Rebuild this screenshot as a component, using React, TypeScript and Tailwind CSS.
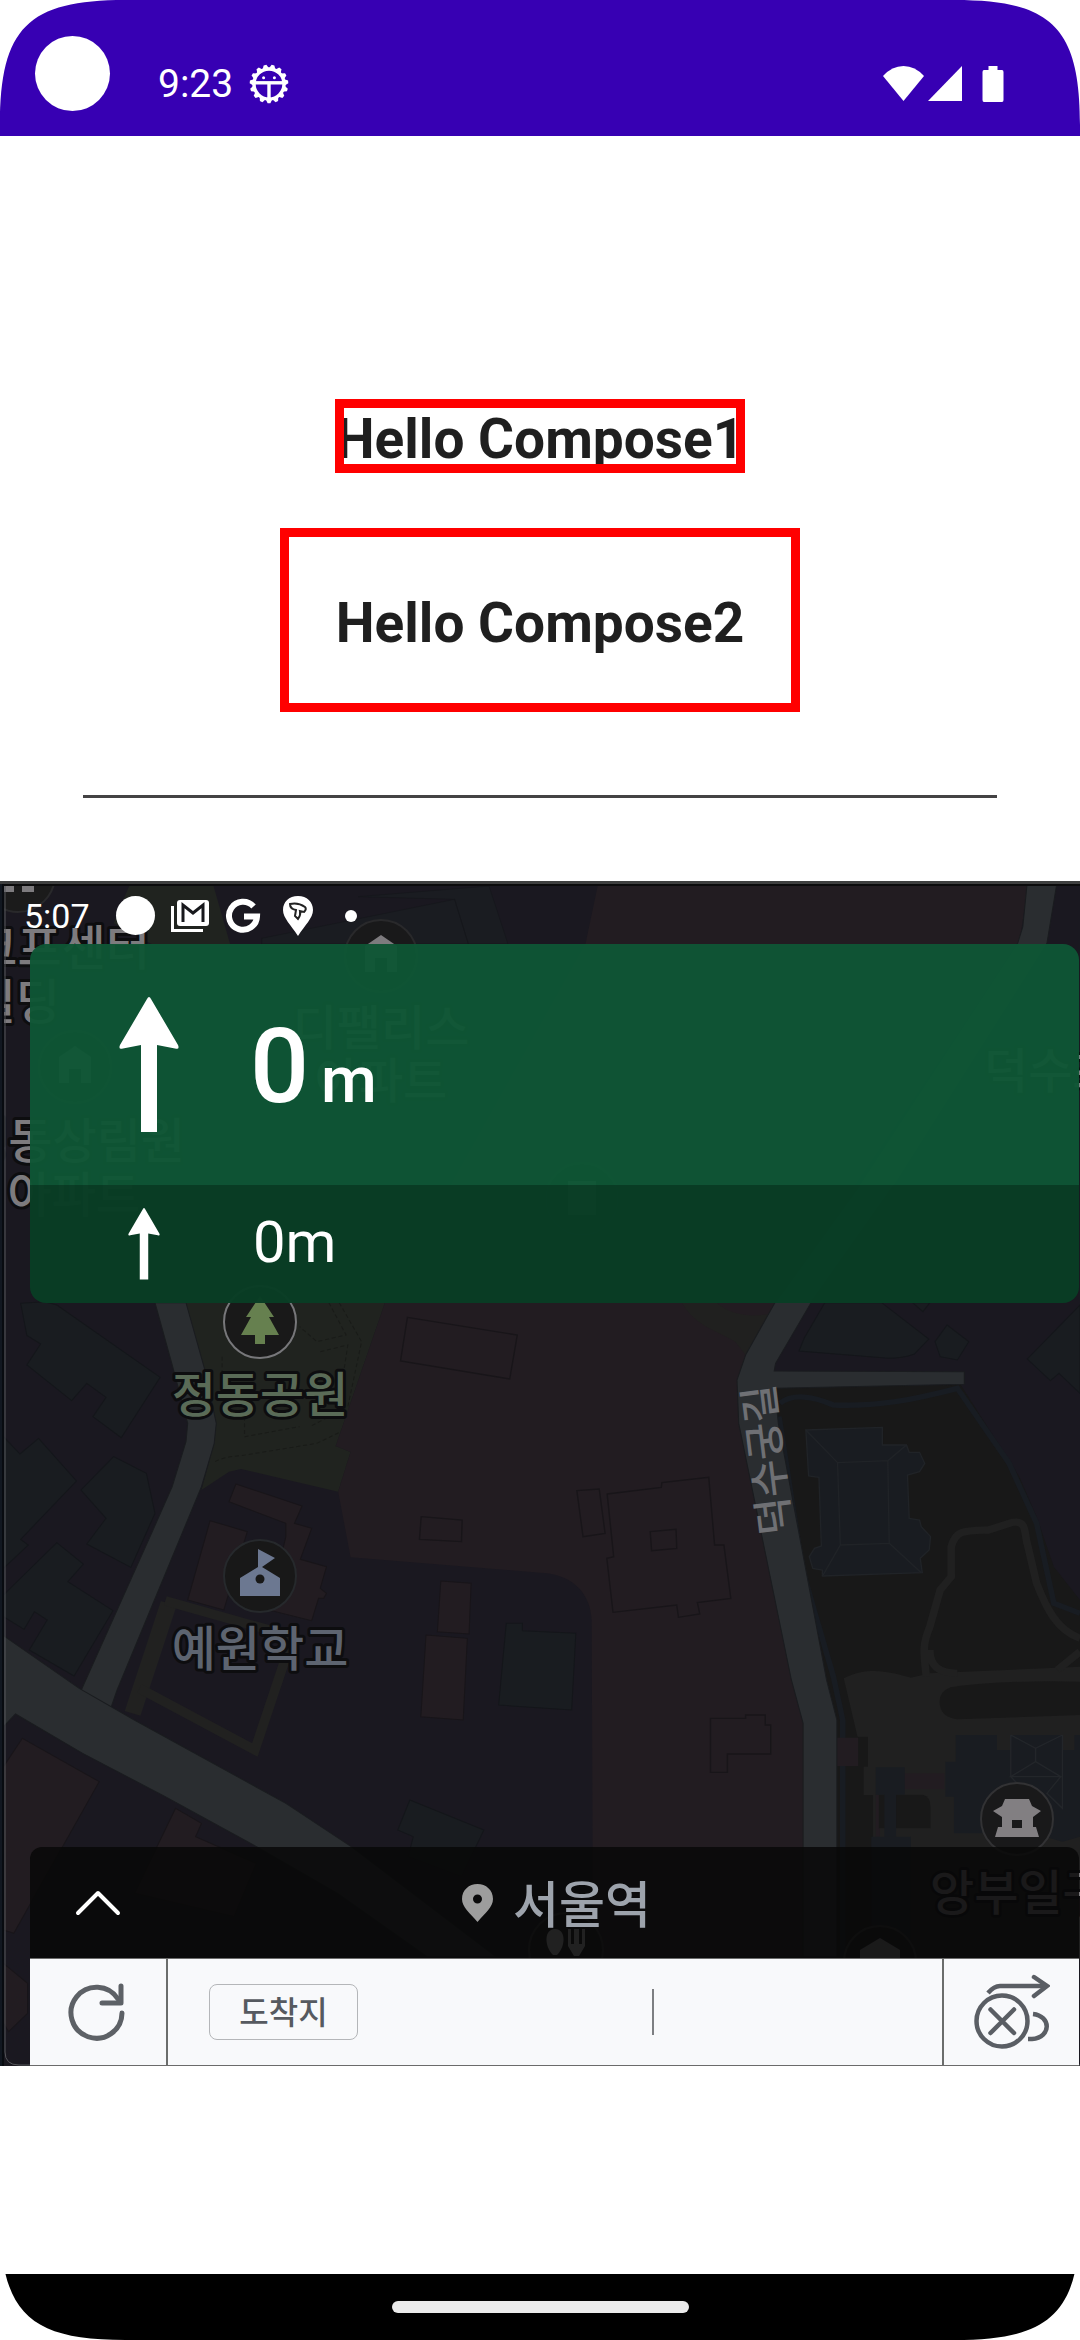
import React from "react";

type CornerProps = { className: string };

/* Smooth display corner laid over the edge of the screen. */
function ScreenCorner({ className }: CornerProps) {
  return (
    <svg className={`pointer-events-none absolute h-[125px] w-[125px] ${className}`} viewBox="0 0 125 125" aria-hidden="true">
      <path d="M0 0V125C0 28 28 0 125 0Z" fill="#fff" />
    </svg>
  );
}

function BugGearIcon() {
  const teeth = Array.from({ length: 15 }, (_, i) => i * 24 + 12);
  return (
    <svg className="h-10 w-10" viewBox="-20 -20 40 40" aria-hidden="true">
      {teeth.map((angle) => (
        <path key={angle} d="M-3.4-15L-1.4-19.3H1.4L3.4-15Z" fill="#fff" transform={`rotate(${angle})`} />
      ))}
      <circle r="15" fill="none" stroke="#fff" strokeWidth="3.4" />
      <path d="M-14-1.2H14" stroke="#fff" strokeWidth="3.4" />
      <path d="M0 0V14" stroke="#fff" strokeWidth="3.4" />
      <circle cx="-5.4" cy="-6.2" r="1.5" fill="#fff" />
      <circle cx="5.4" cy="-6.2" r="1.5" fill="#fff" />
    </svg>
  );
}

function SystemBar() {
  return (
    <header className="relative flex h-34 items-center justify-between bg-[#3700b3] pt-8 pr-[76px] pl-[158px] text-white">
      <div className="absolute top-9 left-[35px] h-[75px] w-[75px] rounded-full bg-white" />
      <div className="flex items-center gap-4">
        <span className="text-[39px] leading-[48px]">9:23</span>
        <BugGearIcon />
      </div>
      <div className="flex items-center">
        <svg className="h-9 w-[42px]" viewBox="0 0 42 36" aria-hidden="true">
          <path d="M0 10Q9 0 20.500 0T41 10L20.500 35Z" fill="#fff" />
        </svg>
        <svg className="ml-[3px] h-9 w-[34px]" viewBox="0 0 34 36" aria-hidden="true">
          <path d="M34 0V35H0Z" fill="#fff" />
        </svg>
        <svg className="ml-5 h-9 w-[22px]" viewBox="0 0 22 36" aria-hidden="true">
          <path d="M6.500 0H15.500V4H20Q21.500 4 21.500 6V34Q21.500 36 20 36H2Q.5 36 .5 34V6Q.5 4 2 4H6.500Z" fill="#fff" />
        </svg>
      </div>
      <ScreenCorner className="top-0 left-0" />
      <ScreenCorner className="top-0 right-0 rotate-90" />
    </header>
  );
}

function MapShapes() {
  return (
    <svg x="0" y="881" width="1080" height="1185" viewBox="0 -1227 3136 3555" preserveAspectRatio="none">
      <rect x="0" y="-1227" width="3136" height="3555" fill="#1a1820" />
      {/* park and school grounds */}
      <path d="M375-1212H620L668-1038H440L330-1100Z" fill="#20231f" />
      <path d="M760-1055L1320-1172L1360-1038H760ZM1040-1180L1420-1212L1475-1038H1360L1320-1172Z" fill="#1a1c21" stroke="#15161a" strokeWidth="2" />
      <path d="M540 38H1118L975 468L1018 486L982 605L700 537L665 545L585 600L622 460L628 400L595 240Z" fill="#20231f" />
      <path
        d="M955 38L1005 135L920 155L870 110M985 38L1050 155L1010 350L900 410M645 200V290M710 380V440L870 410M625 515Q650 500 700 497L920 460L1000 420M930 185L1010 165L990 300"
        fill="none"
        stroke="#191b18"
        strokeWidth="3"
        strokeDasharray="12 8"
      />
      {/* large district */}
      <path
        d="M1736-1215L1700-1038L1118 38L975 468L1018 486L982 605L1018 802L1568 848C1650 850 1715 900 1718 990L1722 2000H2340V1300L2298 1170L2145 400V270L2250 38L2960-1040L2985-1215Z"
        fill="#221c21"
      />
      <path d="M1980 38C2020 110 2080 120 2135 155L2165 195L2250 38Z" fill="#20201f" />
      <path d="M2082 38C2120 75 2180 82 2232 72L2250 38Z" fill="#221c21" />
      {/* west blocks */}
      <g fill="#191c20" stroke="#14161a" strokeWidth="3">
        <path d="M60 40L130 35L165 45L465 262L352 443L270 380L308 322L252 280L208 332L78 225L118 162L78 136Z" />
        <path d="M10 440L58 492L112 445L222 573L60 748L82 765L10 835Z" />
        <path d="M235 600L330 500L425 550L450 670L380 832L252 762L308 685Z" />
        <path d="M10 915L165 758L242 822L197 875L328 962L215 1158L85 1080L137 990L100 965L70 1018L10 980Z" />
        <path d="M1470 1000H1517V1022L1672 1030L1660 1260L1448 1245Z" />
        <path d="M1190 1530L1405 1620L1340 1760L1185 1700L1200 1640L1155 1620Z" />
        <path d="M2395 38H2560L2697 147L2655 192Q2620 205 2580 205L2320 183L2335 145Z" />
        <path d="M2750 105L2813 155L2780 210L2730 200L2715 155ZM2650 38H2700L2680 65Z" />
        <path d="M3136 45L2983 207L3050 272L3075 250L3136 310Z" />
      </g>
      <g fill="#221c21" stroke="#181519" strokeWidth="3">
        <path d="M685 582L877 648L855 700L905 715L872 808L948 830L930 895L948 910L940 925L925 925L905 992L780 960L830 740V700L665 635Z" />
        <path d="M610 692L718 725L650 960L545 930Z" />
        <path d="M1280 873L1368 880L1362 1032L1270 1025Z" />
        <path d="M1237 1035L1357 1045L1345 1290L1222 1280Z" />
        <path d="M65 1345L288 1475L40 1930L10 1920V1430Z" />
        <path d="M510 1555L585 1600L568 1640L745 1720L680 1880L390 1810Z" />
        <path d="M10 2020L80 2080V2170L25 2225L10 2200Z" />
      </g>
      <g fill="none" stroke="#181519" strokeWidth="4">
        <path d="M1183 82L1502 135L1480 267L1163 213Z" />
        <path d="M1223 680L1342 690L1340 755L1218 748Z" />
        <path d="M1675 602L1740 597L1757 730L1693 740Z" />
        <path d="M1763 612L1920 592L1922 578L2058 562L2075 765L2102 765L2122 925L2025 938L2032 972L1970 982L1965 945L1780 967L1762 805L1782 800Z" />
        <path d="M1888 725L1963 718L1965 775L1892 782Z" />
        <path d="M2063 1285H2165V1275H2222V1305H2238V1392H2112V1447H2063Z" />
      </g>
      {/* school footpath */}
      <path d="M490 940L385 1270" stroke="#212120" strokeWidth="48" fill="none" />
      <path d="M480 932L850 1040L740 1380L405 1195" stroke="#212120" strokeWidth="28" fill="none" />
      {/* palace grounds */}
      <path d="M2255 290L2790 285L2960 560L3010 680L3060 830L3136 930V2010H2425V1290L2395 1170L2255 400Z" fill="#181818" />
      <path d="M2450 1165C2530 1125 2590 1150 2645 1163L2700 1150L3136 1130V2010H2535V1515H2508V1430H2520V1340H2490Z" fill="#202020" />
      <path d="M2760 1192Q2900 1170 3136 1175V1275L2780 1288Q2728 1280 2728 1235Q2728 1205 2760 1192Z" fill="#181818" />
      <path
        d="M2690 1160C2680 1080 2680 1060 2700 1010L2730 900L2762 860V770C2775 720 2800 722 2870 720L2940 697C2985 690 2972 730 2985 770L3010 880C3040 960 3070 1020 3136 1045M2700 1080C2700 1130 2730 1150 2780 1150M3070 1140L3136 1085"
        fill="none"
        stroke="#202020"
        strokeWidth="22"
      />
      <path
        d="M2265 340C2300 310 2360 318 2420 345C2550 350 2650 330 2780 295L2930 520L3010 700L3060 940L3136 970M2262 380L2330 840L2420 1160L2447 1290V2000"
        fill="none"
        stroke="#181c22"
        strokeWidth="16"
      />
      <g fill="#191c21" stroke="#202327" strokeWidth="4">
        <path d="M2340 420L2562 412V465H2632L2640 487H2670L2685 520L2670 545L2635 555L2640 685L2670 690L2675 710L2702 740L2698 780L2672 805L2678 848L2388 858V840L2360 835L2350 800L2365 775L2385 768L2378 562L2348 558Z" />
        <path d="M2340 420L2432 518L2440 765L2390 855M2432 518L2578 512L2582 760L2675 848M2440 765L2582 760M2578 512L2632 465" fill="none" />
      </g>
      <path d="M2430 1343H2492V1428H2430ZM2627 1450H2742V1498H2627ZM2543 1514H2555V1640H2543Z" fill="#221c21" />
      <path d="M2600 1514H2680Q2702 1520 2702 1550V1615H2552V1514Z" fill="#181818" />
      <g fill="#191c21">
        <path d="M2543 1432H2627V1514H2602V1640H2568V1514H2543Z" />
        <path d="M2775 1335H2895V1380H2935V1335H3085V1380H3120V1335H3136V1640L3085 1655L3000 1630H2770V1520H2745V1415H2775Z" />
        <path d="M2530 1640H2645V2000H2530Z" />
      </g>
      <path
        d="M2935 1335L3007 1375L3085 1335M3007 1375V1415L2935 1460H3080L3007 1415M2935 1335V1460L3000 1530M3085 1335V1555L3040 1510L3080 1460"
        fill="none"
        stroke="#23262a"
        strokeWidth="4"
      />
      {/* roads */}
      <g fill="#2a2d30" stroke="#1a1c1f" strokeWidth="3">
        <path d="M450 38L500 225L545 400L540 455L500 590L440 730L210 1260L320 1260L340 1200L585 590L622 460L628 400L595 240L540 38Z" />
        <path d="M10 1037L230 1195L390 1290L830 1540L1020 1670L1440 2000H1240L980 1810L745 1670L480 1520L240 1390L45 1272L10 1310Z" />
        <path d="M2982-1215L2970-1090L2955-1040L2500-320L2250 38L2165 195L2140 270L2145 400L2298 1170L2332 1300V2000H2430V1290L2400 1170L2260 400L2250 295L2800 283V245L2248 243L2252 220L2355 38L2600-320L3040-1040L3068-1215Z" />
      </g>
    </svg>
  );
}

function HomePin({ x, y }: { x: number; y: number }) {
  return (
    <g transform={`translate(${x} ${y})`}>
      <circle r="36" fill="#19191a" stroke="#29292b" strokeWidth="2" />
      <path d="M0-21L16-10V16H6V2H-6V16H-16V-10Z" fill="#7d7b7e" />
    </g>
  );
}

function MapLabels() {
  return (
    <g
      fontSize="48"
      fontWeight="500"
      fill="#7d7b7e"
      stroke="#0d0d0f"
      strokeWidth="6"
      strokeLinejoin="round"
      paintOrder="stroke"
      fontFamily="'Noto Sans CJK KR', sans-serif"
    >
      <text x="150" y="965" textAnchor="end">크프센터</text>
      <text x="60" y="1019" textAnchor="end">빌딩</text>
      <text x="185" y="1158" textAnchor="end">정동상림원</text>
      <text x="140" y="1212" textAnchor="end">아파트</text>
      <text x="381" y="1045" textAnchor="middle">디팰리스</text>
      <text x="381" y="1098" textAnchor="middle">아파트</text>
      <text x="984" y="1088">덕수초</text>
      <text x="260" y="1412" textAnchor="middle" fill="#5a6b57">정동공원</text>
      <text x="260" y="1666" textAnchor="middle" fill="#5d6470">예원학교</text>
      <text x="930" y="1910">앙부일구</text>
      <text transform="translate(791 1533) rotate(-97)" fontSize="41" fill="#6f7074" stroke="none">덕수궁길</text>
    </g>
  );
}

function MapPins() {
  return (
    <g>
      <g transform="translate(18 875)">
        <circle r="37" fill="#1b1b1b" stroke="#29292b" strokeWidth="2" />
        <path d="M-14 10H-4V17H-14ZM4 10H16V17H4Z" fill="#7d7b7e" />
      </g>
      <HomePin x={381} y={956} />
      <HomePin x={75} y={1067} />
      <g transform="translate(582 1199)">
        <circle r="36" fill="#19191a" stroke="#29292b" strokeWidth="2" />
        <path d="M-14-18H14V16H-14Z" fill="#7d7b7e" />
      </g>
      <g transform="translate(260 1322)">
        <circle r="36" fill="#191919" stroke="#77777a" strokeWidth="2" />
        <path d="M0-26L14-5H9L19 13H5V22H-5V13H-19L-9-5H-14Z" fill="#66804f" />
      </g>
      <g transform="translate(260 1576)">
        <circle r="36" fill="#181818" stroke="#26292c" strokeWidth="2" />
        <path d="M-2-27L15-18L2-9L20 2V20H-20V2L-2-9Z" fill="#6c7891" />
        <circle cy="3" r="4.500" fill="#181818" />
      </g>
      <g transform="translate(1017 1819)">
        <circle r="36" fill="#19191a" stroke="#323234" strokeWidth="2" />
        <path
          d="M-12-20H12L15-13L24-8L16-2V8H19L22 18H-22L-19 8H-15V-2L-24-8L-15-13ZM-5 1V9H5V1Z"
          fill="#827f82"
          fillRule="evenodd"
        />
      </g>
      <g transform="translate(880 1962)">
        <circle r="36" fill="#19191a" stroke="#323234" strokeWidth="2" />
        <path d="M0-24L20-12V0H-20V-12Z" fill="#827f82" />
      </g>
      <g transform="translate(566 1950)" fill="#b0b0b0">
        <circle r="37" fill="#19191a" stroke="#323234" strokeWidth="2" />
        <path d="M-11-21C0-21 0-4-9 5H-13C-22-4-22-21-11-21Z" />
        <path d="M2-21H5V-6H8V-21H13V-6H16V-21H19V-4L13 6H8L2-4Z" />
      </g>
    </g>
  );
}

function MapCanvas() {
  return (
    <svg className="absolute inset-0 h-full w-full" viewBox="0 881 1080 1185" preserveAspectRatio="xMinYMin slice" role="img" aria-label="지도">
      <MapShapes />
      <MapPins />
      <MapLabels />
      {/* device frame */}
      <rect x="0" y="881" width="4" height="1185" fill="#111720" />
      <path d="M3 881V2066" stroke="#000" strokeWidth="1" />
      <path d="M5 885V2052Q5 2065 19 2065H1080" fill="none" stroke="#55565a" strokeWidth="1" />
      <rect x="0" y="881" width="1080" height="3" fill="#3f4040" />
      <rect x="4" y="884" width="1076" height="2" fill="#0b0b0c" />
    </svg>
  );
}

function StraightArrow({ className }: { className: string }) {
  return (
    <svg className={className} viewBox="0 0 60 136" aria-label="직진" role="img">
      <path
        d="M30 0Q31 0 32 2L59 48Q61 53 56 51.500L38 48V135H22V48L4 51.500Q-1 53 1 48L28 2Q29 0 30 0Z"
        fill="#fff"
      />
    </svg>
  );
}

function MapStatusRow() {
  return (
    <div className="flex h-[63px] items-center pt-1.5 pl-6 text-white">
      <span className="text-[34px] leading-10">5:07</span>
      <span className="ml-[26px] h-[39px] w-[39px] rounded-full bg-white" />
      <svg className="ml-4 h-8 w-[38px]" viewBox="0 0 38 32" aria-hidden="true">
        <path d="M1.500 6V30.500H32" fill="none" stroke="#fff" strokeWidth="3" />
        <rect x="6" y="0" width="32" height="26" rx="3" fill="#fff" />
        <path d="M12 22V5L22 13L32 5V22" fill="none" stroke="#17181c" strokeWidth="3" />
      </svg>
      <svg className="ml-4 h-9 w-9" viewBox="0 0 36 36" aria-hidden="true">
        <path d="M28.500 8.500A14 14 0 1 0 32 18.500H19" fill="none" stroke="#fff" strokeWidth="6" />
      </svg>
      <svg className="ml-[22px] h-10 w-[30px]" viewBox="0 0 30 40" aria-hidden="true">
        <path d="M15 0C6 0 0 6 0 14C0 22 8 29 15 40C22 29 30 22 30 14C30 6 24 0 15 0Z" fill="#fff" />
        <path d="M7 8Q15 6 22 11Q24 13 21 16L17 15Q18 19 15 23L12 20L13 14Q7 13 7 8Z" fill="none" stroke="#222" strokeWidth="2" />
      </svg>
      <span className="ml-8 h-3 w-3 rounded-full bg-white" />
    </div>
  );
}

function GuidanceBanner() {
  return (
    <div className="overflow-hidden rounded-2xl text-white">
      <div className="flex h-[241px] items-center bg-[#0e5635]/97 pl-[89px]">
        <StraightArrow className="h-[136px] w-[60px]" />
        <p className="ml-[71px] flex items-baseline gap-3 pt-1 font-medium">
          <span className="text-[104px] leading-none">0</span>
          <span className="text-[64px] leading-none">m</span>
        </p>
      </div>
      <div className="flex h-[118px] items-center bg-[#093d25]/98 pl-[98px]">
        <StraightArrow className="h-[72px] w-8" />
        <p className="ml-[93px] pb-1 text-[58px] leading-none">0m</p>
      </div>
    </div>
  );
}

function DestinationBar() {
  return (
    <div className="grid h-[111px] grid-cols-[1fr_auto_1fr] items-center rounded-t-xl bg-[#080808]/85 pl-9">
      <button type="button" aria-label="펼치기" className="flex h-16 w-16 items-center justify-center">
        <svg className="h-7 w-12" viewBox="0 0 48 28" fill="none" stroke="#fff" strokeWidth="4" strokeLinecap="round" strokeLinejoin="round">
          <path d="M4 24L24 4L44 24" />
        </svg>
      </button>
      <div className="mr-8 flex items-center gap-5">
        <svg className="h-[38px] w-[31px]" viewBox="0 0 31 38" aria-hidden="true">
          <path d="M15.500 0C7 0 0 6 0 15C0 23 8 29 15.500 38C23 29 31 23 31 15C31 6 24 0 15.500 0ZM15.500 10.500A4.500 4.500 0 1 1 15.500 19.500A4.500 4.500 0 1 1 15.500 10.500Z" fill="#9d9d9d" fillRule="evenodd" />
        </svg>
        <span className="pt-1.5 text-[50px] leading-[64px] font-medium text-[#9da3ac]">서울역</span>
      </div>
    </div>
  );
}

function RouteActions() {
  return (
    <div className="flex h-[108px] border-t border-b border-[#6b6b6b] bg-[#f8f9fb]">
      <button type="button" aria-label="다시 탐색" className="flex w-[138px] items-center justify-center border-r-2 border-[#6b6d6c]">
        <svg className="h-[60px] w-[60px]" viewBox="0 0 60 60" fill="none" stroke="#5d6166" strokeWidth="5" strokeLinecap="round" strokeLinejoin="round">
          <path d="M54 31A25.500 25.500 0 1 1 50 17" />
          <path d="M53 4V21H34" />
        </svg>
      </button>
      <div className="flex flex-1 items-center">
        <div className="w-5/8 pl-[41px]">
          <button type="button" className="flex h-14 w-[149px] items-center justify-center rounded-lg border border-[#b4b6b9] pt-0.5 text-[32px] leading-10 font-medium text-[#565a60]">
            도착지
          </button>
        </div>
        <div className="h-[46px] w-[2px] bg-[#7d7f82]" />
      </div>
      <button type="button" aria-label="경로 취소" className="flex w-[137px] items-center justify-center border-l-2 border-[#6b6d6c]">
        <svg className="h-[76px] w-[76px]" viewBox="0 0 76 76" fill="none" stroke="#5a5e64" strokeWidth="4.500">
          <circle cx="28" cy="47" r="25.500" />
          <path d="M16.500 35.500L40 59M40 35.500L16.500 59" strokeLinecap="round" />
          <path d="M14 19Q20 12 26 12H72" />
          <path d="M60 3L73 12L60 22" strokeLinecap="round" />
          <path d="M59 40C77 42 78 63 58 65H54" />
        </svg>
      </button>
    </div>
  );
}

function NavigationPreview() {
  return (
    <section className="relative w-full overflow-hidden bg-[#1a1820]">
      <MapCanvas />
      <div className="relative flex flex-col">
        <MapStatusRow />
        <div className="flex flex-col pr-px pl-[30px]">
          <GuidanceBanner />
          <div className="h-[544px]" />
          <DestinationBar />
          <RouteActions />
        </div>
      </div>
    </section>
  );
}

export default function App() {
  return (
    <div className="flex min-h-screen flex-col bg-white font-['Roboto','Noto_Sans_CJK_KR',sans-serif]">
      <SystemBar />
      <main className="flex flex-1 flex-col items-center pt-[263px]">
        <p className="px-px pt-1.5 text-[55px] leading-[68px] font-bold text-[#1f1f1f] outline-[9px] -outline-offset-[9px] outline-[#ff0000] outline-solid">
          Hello Compose1
        </p>
        <p className="mt-[55px] px-14 pt-[61px] pb-[55px] text-[55px] leading-[68px] font-bold text-[#1f1f1f] outline-[9px] -outline-offset-[9px] outline-[#ff0000] outline-solid">
          Hello Compose2
        </p>
        <div className="my-[83px] self-stretch px-[83px]">
          <hr className="h-[3px] border-0 bg-[#444344]" />
        </div>
        <NavigationPreview />
      </main>
      <footer className="relative flex h-[66px] items-center justify-center bg-black">
        <div className="h-3 w-[297px] rounded-full bg-[#ebebeb]" />
        <ScreenCorner className="bottom-0 left-0 -rotate-90" />
        <ScreenCorner className="right-0 bottom-0 rotate-180" />
      </footer>
    </div>
  );
}
